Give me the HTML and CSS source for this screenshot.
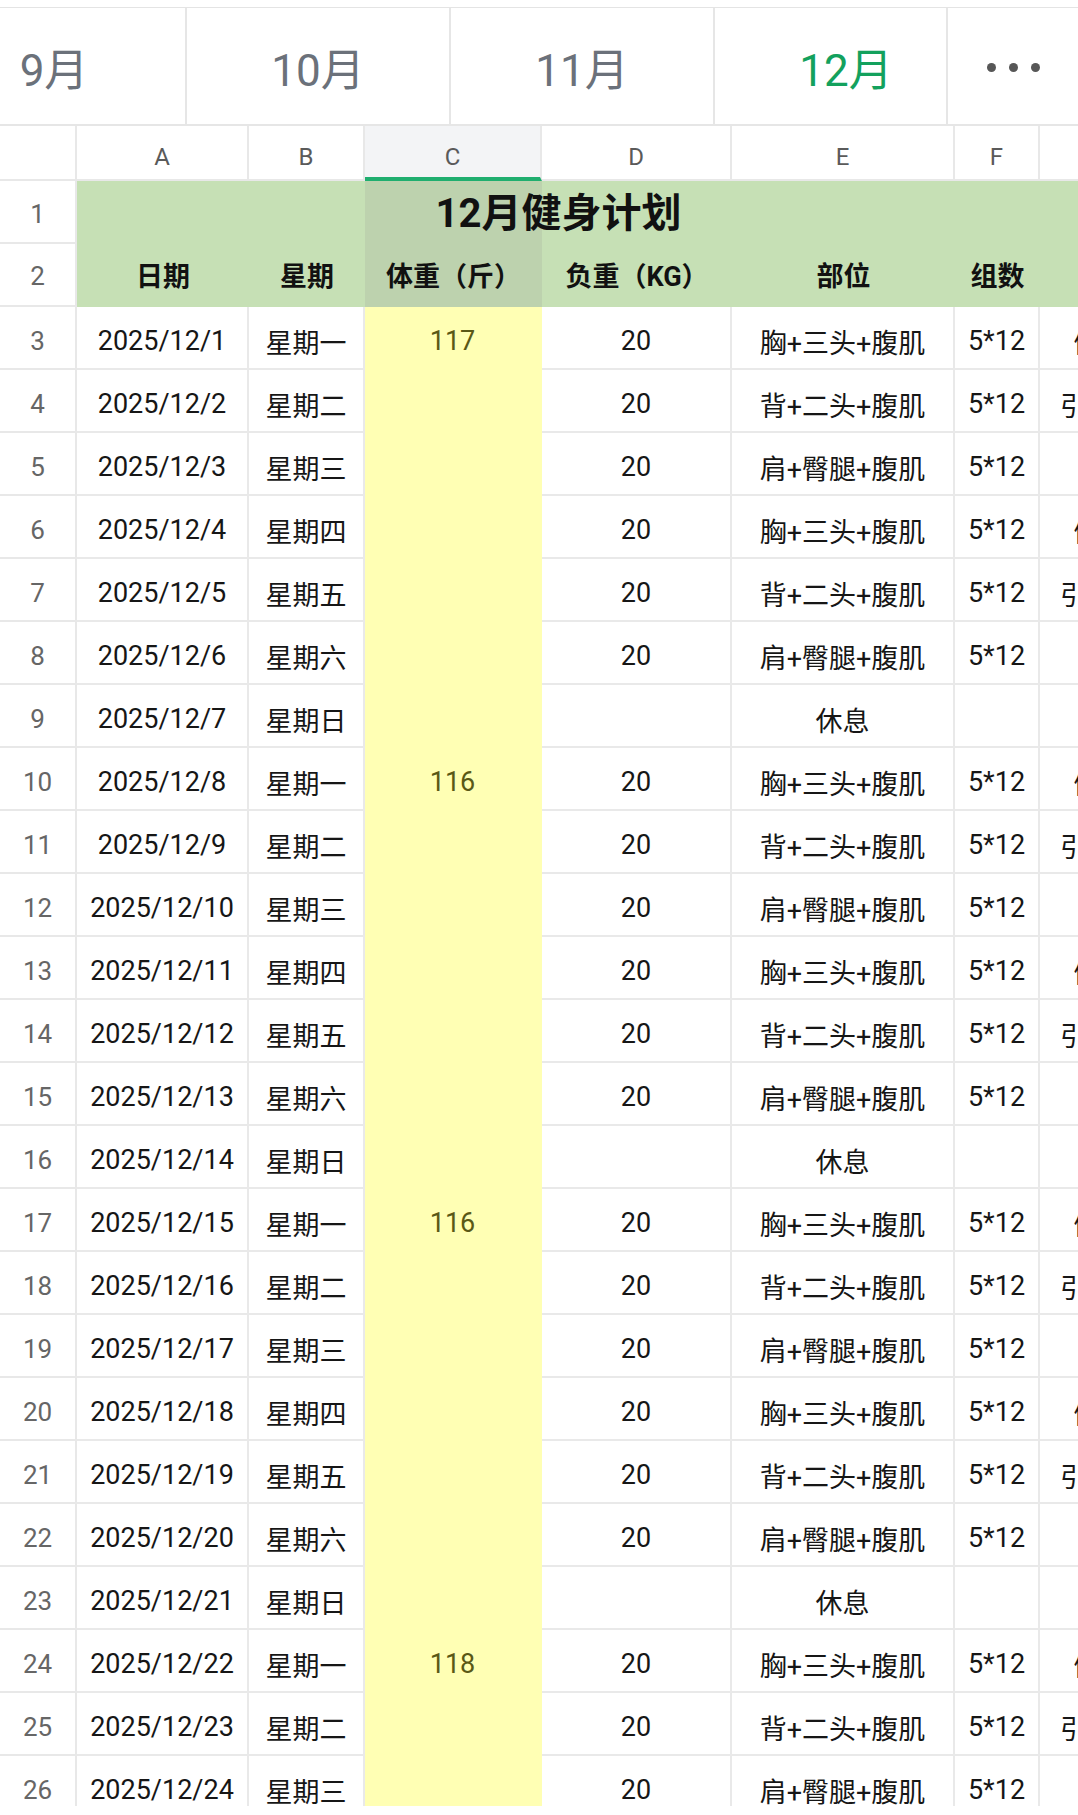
FILE: index.html
```html
<!DOCTYPE html>
<html lang="zh-CN">
<head>
<meta charset="utf-8">
<title>12月健身计划</title>
<link rel="stylesheet" href="styles.css">
</head>
<body>
<div class="page">
  <div class="topgap"></div>
  <div class="tabbar">
    <div class="tabs">
      <div class="tab first">9月</div>
      <div class="tab">10月</div>
      <div class="tab">11月</div>
      <div class="tab active">12月</div>
    </div>
    <div class="more"><span class="dot"></span><span class="dot"></span><span class="dot"></span></div>
  </div>
  <div class="sheet-wrap">
    <div class="sheet">
      <!-- column headers -->
      <div class="ch r1 k0"></div>
      <div class="ch r1 kA">A</div>
      <div class="ch r1 kB">B</div>
      <div class="ch sel-h r1 kC">C</div>
      <div class="ch r1 kD">D</div>
      <div class="ch r1 kE">E</div>
      <div class="ch r1 kF">F</div>
      <div class="ch r1 kG"></div>
      <!-- row 1 -->
      <div class="rh rh1 r2 k0">1</div>
      <div class="hg r2 kA"></div>
      <div class="hg r2 kB"></div>
      <div class="hg sel r2 kC"></div>
      <div class="hg r2 kD"></div>
      <div class="hg r2 kE"></div>
      <div class="hg r2 kF"></div>
      <div class="hg r2 kG"></div>
      <div class="title r2">12月健身计划</div>
      <!-- row 2 -->
      <div class="rh rh2 r3 k0">2</div>
      <div class="hg hd r3 kA">日期</div>
      <div class="hg hd r3 kB">星期</div>
      <div class="hg hd sel r3 kC">体重（斤）</div>
      <div class="hg hd r3 kD">负重（KG）</div>
      <div class="hg hd r3 kE">部位</div>
      <div class="hg hd r3 kF">组数</div>
      <div class="hg r3 kG"></div>

      <div class="rh">3</div><div class="c">2025/12/1</div><div class="c">星期一</div><div class="c y">117</div><div class="c">20</div><div class="c">胸+三头+腹肌</div><div class="c">5*12</div><div class="c">俯卧撑</div>
      <div class="rh">4</div><div class="c">2025/12/2</div><div class="c">星期二</div><div class="c y"></div><div class="c">20</div><div class="c">背+二头+腹肌</div><div class="c">5*12</div><div class="c">引体向上</div>
      <div class="rh">5</div><div class="c">2025/12/3</div><div class="c">星期三</div><div class="c y"></div><div class="c">20</div><div class="c">肩+臀腿+腹肌</div><div class="c">5*12</div><div class="c">深蹲</div>
      <div class="rh">6</div><div class="c">2025/12/4</div><div class="c">星期四</div><div class="c y"></div><div class="c">20</div><div class="c">胸+三头+腹肌</div><div class="c">5*12</div><div class="c">俯卧撑</div>
      <div class="rh">7</div><div class="c">2025/12/5</div><div class="c">星期五</div><div class="c y"></div><div class="c">20</div><div class="c">背+二头+腹肌</div><div class="c">5*12</div><div class="c">引体向上</div>
      <div class="rh">8</div><div class="c">2025/12/6</div><div class="c">星期六</div><div class="c y"></div><div class="c">20</div><div class="c">肩+臀腿+腹肌</div><div class="c">5*12</div><div class="c">深蹲</div>
      <div class="rh">9</div><div class="c">2025/12/7</div><div class="c">星期日</div><div class="c y"></div><div class="c"></div><div class="c">休息</div><div class="c"></div><div class="c"></div>
      <div class="rh">10</div><div class="c">2025/12/8</div><div class="c">星期一</div><div class="c y">116</div><div class="c">20</div><div class="c">胸+三头+腹肌</div><div class="c">5*12</div><div class="c">俯卧撑</div>
      <div class="rh">11</div><div class="c">2025/12/9</div><div class="c">星期二</div><div class="c y"></div><div class="c">20</div><div class="c">背+二头+腹肌</div><div class="c">5*12</div><div class="c">引体向上</div>
      <div class="rh">12</div><div class="c">2025/12/10</div><div class="c">星期三</div><div class="c y"></div><div class="c">20</div><div class="c">肩+臀腿+腹肌</div><div class="c">5*12</div><div class="c">深蹲</div>
      <div class="rh">13</div><div class="c">2025/12/11</div><div class="c">星期四</div><div class="c y"></div><div class="c">20</div><div class="c">胸+三头+腹肌</div><div class="c">5*12</div><div class="c">俯卧撑</div>
      <div class="rh">14</div><div class="c">2025/12/12</div><div class="c">星期五</div><div class="c y"></div><div class="c">20</div><div class="c">背+二头+腹肌</div><div class="c">5*12</div><div class="c">引体向上</div>
      <div class="rh">15</div><div class="c">2025/12/13</div><div class="c">星期六</div><div class="c y"></div><div class="c">20</div><div class="c">肩+臀腿+腹肌</div><div class="c">5*12</div><div class="c">深蹲</div>
      <div class="rh">16</div><div class="c">2025/12/14</div><div class="c">星期日</div><div class="c y"></div><div class="c"></div><div class="c">休息</div><div class="c"></div><div class="c"></div>
      <div class="rh">17</div><div class="c">2025/12/15</div><div class="c">星期一</div><div class="c y">116</div><div class="c">20</div><div class="c">胸+三头+腹肌</div><div class="c">5*12</div><div class="c">俯卧撑</div>
      <div class="rh">18</div><div class="c">2025/12/16</div><div class="c">星期二</div><div class="c y"></div><div class="c">20</div><div class="c">背+二头+腹肌</div><div class="c">5*12</div><div class="c">引体向上</div>
      <div class="rh">19</div><div class="c">2025/12/17</div><div class="c">星期三</div><div class="c y"></div><div class="c">20</div><div class="c">肩+臀腿+腹肌</div><div class="c">5*12</div><div class="c">深蹲</div>
      <div class="rh">20</div><div class="c">2025/12/18</div><div class="c">星期四</div><div class="c y"></div><div class="c">20</div><div class="c">胸+三头+腹肌</div><div class="c">5*12</div><div class="c">俯卧撑</div>
      <div class="rh">21</div><div class="c">2025/12/19</div><div class="c">星期五</div><div class="c y"></div><div class="c">20</div><div class="c">背+二头+腹肌</div><div class="c">5*12</div><div class="c">引体向上</div>
      <div class="rh">22</div><div class="c">2025/12/20</div><div class="c">星期六</div><div class="c y"></div><div class="c">20</div><div class="c">肩+臀腿+腹肌</div><div class="c">5*12</div><div class="c">深蹲</div>
      <div class="rh">23</div><div class="c">2025/12/21</div><div class="c">星期日</div><div class="c y"></div><div class="c"></div><div class="c">休息</div><div class="c"></div><div class="c"></div>
      <div class="rh">24</div><div class="c">2025/12/22</div><div class="c">星期一</div><div class="c y">118</div><div class="c">20</div><div class="c">胸+三头+腹肌</div><div class="c">5*12</div><div class="c">俯卧撑</div>
      <div class="rh">25</div><div class="c">2025/12/23</div><div class="c">星期二</div><div class="c y"></div><div class="c">20</div><div class="c">背+二头+腹肌</div><div class="c">5*12</div><div class="c">引体向上</div>
      <div class="rh">26</div><div class="c">2025/12/24</div><div class="c">星期三</div><div class="c y"></div><div class="c">20</div><div class="c">肩+臀腿+腹肌</div><div class="c">5*12</div><div class="c">深蹲</div>
    </div>
  </div>
</div>
</body>
</html>
```

FILE: styles.css
```css
html, body {
  margin: 0;
  padding: 0;
  background: #ffffff;
}
body {
  width: 1078px;
  height: 1815px;
  overflow: hidden;
  font-family: Roboto, "Noto Sans CJK SC", sans-serif;
  color: #1a1a1a;
}
.page {
  width: 1078px;
  overflow: hidden;
}
.topgap {
  height: 7px;
  border-bottom: 1px solid #e4e4e4;
  background: #ffffff;
}
.tabbar {
  position: relative;
  height: 118px;
  border-bottom: 2px solid #e6e6e6;
  overflow: hidden;
  box-sizing: border-box;
}
.tabs {
  display: flex;
  height: 100%;
}
.tab {
  flex: 0 0 264px;
  height: 100%;
  box-sizing: border-box;
  border-right: 2px solid #e6e6e6;
  display: flex;
  align-items: center;
  justify-content: center;
  font-size: 44px;
  color: #6b717a;
  padding-top: 2px;
}
.tab.first {
  margin-left: -77px;
}
.tab.active {
  color: #13a15d;
}
.more {
  position: absolute;
  top: 0;
  right: 0;
  width: 132px;
  height: 100%;
  box-sizing: border-box;
  background: #ffffff;
  border-left: 2px solid #e6e6e6;
  display: flex;
  align-items: center;
  justify-content: center;
  gap: 13px;
  padding-top: 2px;
}
.dot {
  width: 9px;
  height: 9px;
  border-radius: 50%;
  background: #575757;
}
.sheet-wrap {
  height: 1680px;
  overflow: hidden;
}
.sheet {
  display: grid;
  grid-template-columns: 77px 172px 116px 177px 190px 223px 85px 150px;
  grid-template-rows: 55px 63px 63px;
  grid-auto-rows: 63px;
  width: max-content;
}
.sheet > div {
  box-sizing: border-box;
  display: flex;
  align-items: center;
  justify-content: center;
  white-space: nowrap;
}
.r1 { grid-row: 1; }
.r2 { grid-row: 2; }
.r3 { grid-row: 3; }
.k0 { grid-column: 1; }
.kA { grid-column: 2; }
.kB { grid-column: 3; }
.kC { grid-column: 4; }
.kD { grid-column: 5; }
.kE { grid-column: 6; }
.kF { grid-column: 7; }
.kG { grid-column: 8; }

.ch {
  font-size: 24px;
  color: #5a5a5a;
  border-right: 2px solid #e8e8e8;
  border-bottom: 2px solid #e8e8e8;
  background: #ffffff;
  padding-top: 9px;
}
.ch.sel-h {
  background: #f3f4f6;
  border-bottom: 4px solid #1fae6f;
  padding-top: 11px;
}
.rh {
  font-size: 26px;
  color: #666666;
  border-right: 2px solid #e8e8e8;
  border-bottom: 2px solid #e8e8e8;
  background: #ffffff;
  padding-top: 7px;
}
.rh.rh1 {
  padding-top: 5px;
}
.rh.rh2 {
  padding-top: 2px;
}
.hg {
  background: #c6e0b5;
}
.hg.sel {
  background: #bdd2ae;
}
.hd {
  font-size: 27px;
  font-weight: 700;
  color: #111111;
  padding-bottom: 2px;
}
.title {
  grid-column: 2 / 8;
  z-index: 1;
  font-size: 40px;
  font-weight: 700;
  color: #111111;
  padding-bottom: 5px;
}
.c {
  font-size: 27px;
  color: #161616;
  border-right: 2px solid #e9e9e9;
  border-bottom: 2px solid #e9e9e9;
  background: #ffffff;
  padding-top: 7px;
}
.c.y {
  background: #ffffb4;
  color: #5a5816;
  border-right-color: #ffffb4;
  border-bottom-color: #ffffb4;
}
```
